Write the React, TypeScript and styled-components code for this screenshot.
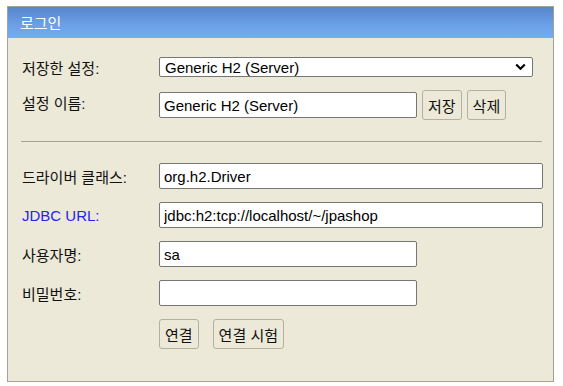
import React from 'react'
import styled, { createGlobalStyle } from 'styled-components'

const GlobalStyle = createGlobalStyle`
  body {
    margin: 0;
    background: #ffffff;
    font-family: 'Liberation Sans', 'Noto Sans CJK KR', sans-serif;
    font-size: 15px;
  }
`

const fontStack = `'Liberation Sans', 'Noto Sans CJK KR', sans-serif`

const Panel = styled.div`
  box-sizing: border-box;
  width: 547px;
  height: 376px;
  margin: 6px 0 0 7px;
  border: 1px solid #a5a295;
  background: #ece9d8;
  display: flex;
  flex-direction: column;
`

const Header = styled.div`
  height: 31px;
  padding-left: 12px;
  display: flex;
  align-items: center;
  background: linear-gradient(to bottom, #5784cb 0%, #6a9fe6 55%, #74aef0 100%);
  color: #ffffff;
  font-size: 15px;
`

const Form = styled.div`
  display: flex;
  flex-direction: column;
  gap: 13px;
  padding: 19px 9px 0 14px;
`

const Row = styled.div<{ $height: number }>`
  display: flex;
  align-items: center;
  height: ${p => p.$height}px;
`

const Label = styled.label<{ $blue?: boolean; $shift?: number }>`
  width: 137px;
  flex-shrink: 0;
  color: ${p => (p.$blue ? '#2424f2' : '#111111')};
  font-size: 15px;
  position: relative;
  top: ${p => p.$shift || 0}px;
`

const Field = styled.input<{ $width: number }>`
  box-sizing: border-box;
  width: ${p => p.$width}px;
  height: 26px;
  margin: 0;
  padding: 0 4px;
  border: 1px solid #767676;
  border-radius: 2px;
  background: #ffffff;
  color: #000000;
  font-family: ${fontStack};
  font-size: 15px;
`

const SelectWrap = styled.div`
  position: relative;
  width: 374px;
  height: 20px;
`

const Select = styled.select`
  box-sizing: border-box;
  appearance: none;
  width: 100%;
  height: 20px;
  margin: 0;
  padding: 0 0 0 5px;
  border: 1px solid #767676;
  border-radius: 2px;
  background: #ffffff;
  color: #000000;
  font-family: ${fontStack};
  font-size: 15px;
`

const Chevron = styled.svg`
  position: absolute;
  right: 7px;
  top: 6px;
  pointer-events: none;
`

const Buttons = styled.div<{ $gap: number; $offset?: number }>`
  display: flex;
  gap: ${p => p.$gap}px;
  margin-left: ${p => p.$offset || 0}px;
`

const Button = styled.button`
  box-sizing: border-box;
  height: 30px;
  padding: 0 5px;
  margin: 0;
  border: 1px solid #b3afa2;
  border-radius: 3px;
  background: #ece9d8;
  color: #111111;
  font-family: ${fontStack};
  font-size: 15px;
`

const Divider = styled.hr`
  margin: 8px 0 8px -1px;
  width: 521px;
  height: 0;
  border: 0;
  border-top: 1px solid #a3a095;
`

const Spacer = styled.div`
  width: 137px;
  flex-shrink: 0;
`

export default function App() {
  return (
    <>
      <GlobalStyle />
      <Panel>
        <Header>로그인</Header>
        <Form>
          <Row $height={20}>
            <Label>저장한 설정:</Label>
            <SelectWrap>
              <Select defaultValue="Generic H2 (Server)">
                <option>Generic H2 (Server)</option>
              </Select>
              <Chevron width="11" height="8" viewBox="0 0 11 8">
                <path d="M1.2 1.5 L5.5 5.8 L9.8 1.5" fill="none" stroke="#000" strokeWidth="2.2" />
              </Chevron>
            </SelectWrap>
          </Row>
          <Row $height={30}>
            <Label $shift={-3}>설정 이름:</Label>
            <Field $width={258} defaultValue="Generic H2 (Server)" />
            <Buttons $gap={5} $offset={5}>
              <Button>저장</Button>
              <Button>삭제</Button>
            </Buttons>
          </Row>
          <Divider />
          <Row $height={26}>
            <Label>드라이버 클래스:</Label>
            <Field $width={384} defaultValue="org.h2.Driver" />
          </Row>
          <Row $height={26}>
            <Label $blue>JDBC URL:</Label>
            <Field $width={384} defaultValue="jdbc:h2:tcp://localhost/~/jpashop" />
          </Row>
          <Row $height={26}>
            <Label>사용자명:</Label>
            <Field $width={258} defaultValue="sa" />
          </Row>
          <Row $height={26}>
            <Label>비밀번호:</Label>
            <Field $width={258} type="password" />
          </Row>
          <Row $height={30}>
            <Spacer />
            <Buttons $gap={14}>
              <Button>연결</Button>
              <Button>연결 시험</Button>
            </Buttons>
          </Row>
        </Form>
      </Panel>
    </>
  )
}
